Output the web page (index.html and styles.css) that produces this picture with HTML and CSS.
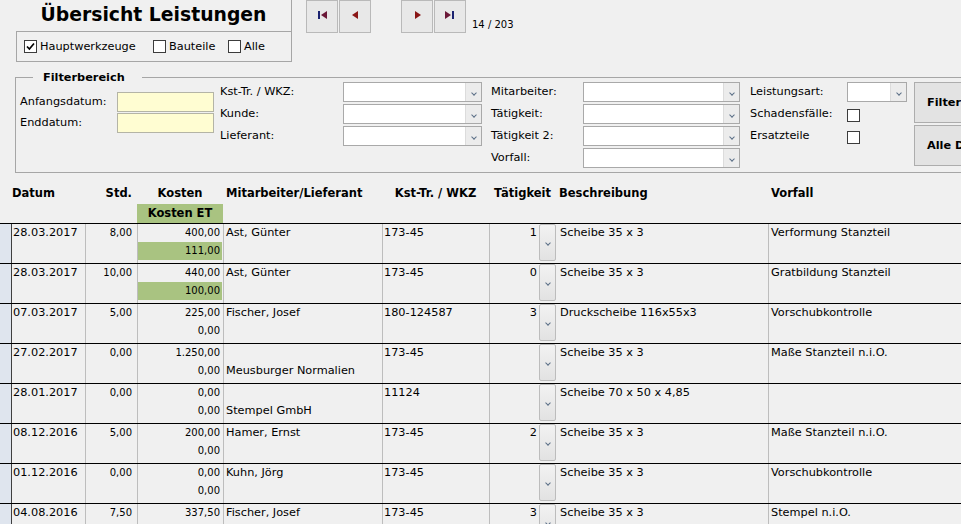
FILE: index.html
```html
<!DOCTYPE html>
<html lang="de">
<head>
    <meta charset="UTF-8">
    <title>Übersicht Leistungen</title>
    <link rel="stylesheet" href="styles.css">
</head>
<body>

    <!-- Kopfbereich: Titel, Auswahl, Navigation -->
    <div class="kopf">
        <div class="titel-box">
            <div class="titel">Übersicht Leistungen</div>
            <div class="optionen">
                <label class="option opt-1"><span class="check"><svg width="11" height="11" viewBox="0 0 11 11"><path d="M2 5.5 L4.4 8 L9 2.5" fill="none" stroke="#000" stroke-width="1.7"/></svg></span>Hauptwerkzeuge</label>
                <label class="option opt-2"><span class="check"></span>Bauteile</label>
                <label class="option"><span class="check"></span>Alle</label>
            </div>
        </div>

        <div class="navi">
            <button class="nav-btn"><svg width="9" height="8" viewBox="0 0 9 8"><rect x="0" y="0" width="2" height="8" fill="#1b2370"/><polygon points="9,0 3,4 9,8" fill="#6b1838"/></svg></button>
            <button class="nav-btn"><svg width="7" height="8" viewBox="0 0 7 8"><polygon points="6,0 0,4 6,8" fill="#8a1616"/></svg></button>
            <button class="nav-btn abstand"><svg width="7" height="8" viewBox="0 0 7 8"><polygon points="1,0 7,4 1,8" fill="#8a1616"/></svg></button>
            <button class="nav-btn"><svg width="10" height="8" viewBox="0 0 10 8"><polygon points="0,0 6,4 0,8" fill="#6b1838"/><rect x="7" y="0" width="2" height="8" fill="#1b2370"/></svg></button>
            <span class="datensatz">14 / 203</span>
        </div>
    </div>

    <!-- Filterbereich -->
    <div class="filter">
        <span class="filter-titel">Filterbereich</span>

        <div class="spalte spalte-a">
            <span>Anfangsdatum:</span><span class="feld-gelb"></span>
            <span>Enddatum:</span><span class="feld-gelb"></span>
        </div>

        <div class="spalte spalte-b">
            <span>Kst-Tr. / WKZ:</span><span class="combo"><span class="pfeil"></span></span>
            <span>Kunde:</span><span class="combo"><span class="pfeil"></span></span>
            <span>Lieferant:</span><span class="combo"><span class="pfeil"></span></span>
        </div>

        <div class="spalte spalte-c">
            <span>Mitarbeiter:</span><span class="combo"><span class="pfeil"></span></span>
            <span>Tätigkeit:</span><span class="combo"><span class="pfeil"></span></span>
            <span>Tätigkeit 2:</span><span class="combo"><span class="pfeil"></span></span>
            <span>Vorfall:</span><span class="combo"><span class="pfeil"></span></span>
        </div>

        <div class="spalte spalte-d">
            <span>Leistungsart:</span><span class="combo"><span class="pfeil"></span></span>
            <span>Schadensfälle:</span><span class="kasten"><span class="check"></span></span>
            <span>Ersatzteile</span><span class="kasten"><span class="check"></span></span>
        </div>

        <div class="knoepfe">
            <button class="filter-btn">Filter</button>
            <button class="filter-btn">Alle Daten</button>
        </div>
    </div>

    <!-- Liste -->
    <div class="liste-kopf">
        <div></div>
        <div class="k-datum">Datum</div>
        <div class="k-std">Std.</div>
        <div class="k-mitte">Kosten</div>
        <div>Mitarbeiter/Lieferant</div>
        <div class="k-mitte">Kst-Tr. / WKZ</div>
        <div class="k-mitte">Tätigkeit</div>
        <div>Beschreibung</div>
        <div>Vorfall</div>
        <div></div>
        <div></div>
        <div></div>
        <div class="kosten-et">Kosten ET</div>
    </div>

    <div class="zeile">
        <div class="z-sel"></div>
        <div class="z-datum">28.03.2017</div>
        <div class="z-std">8,00</div>
        <div class="z-kosten"><div>400,00</div><div class="gruen">111,00</div></div>
        <div class="z-ma"><div>Ast, Günter</div></div>
        <div class="z-kst">173-45</div>
        <div class="z-tk"><span class="tk-wert">1</span><span class="tk-btn"></span></div>
        <div class="z-text">Scheibe 35 x 3</div>
        <div class="z-vorfall">Verformung Stanzteil</div>
    </div>

    <div class="zeile">
        <div class="z-sel"></div>
        <div class="z-datum">28.03.2017</div>
        <div class="z-std">10,00</div>
        <div class="z-kosten"><div>440,00</div><div class="gruen">100,00</div></div>
        <div class="z-ma"><div>Ast, Günter</div></div>
        <div class="z-kst">173-45</div>
        <div class="z-tk"><span class="tk-wert">0</span><span class="tk-btn"></span></div>
        <div class="z-text">Scheibe 35 x 3</div>
        <div class="z-vorfall">Gratbildung Stanzteil</div>
    </div>

    <div class="zeile">
        <div class="z-sel"></div>
        <div class="z-datum">07.03.2017</div>
        <div class="z-std">5,00</div>
        <div class="z-kosten"><div>225,00</div><div>0,00</div></div>
        <div class="z-ma"><div>Fischer, Josef</div></div>
        <div class="z-kst">180-124587</div>
        <div class="z-tk"><span class="tk-wert">3</span><span class="tk-btn"></span></div>
        <div class="z-text">Druckscheibe 116x55x3</div>
        <div class="z-vorfall">Vorschubkontrolle</div>
    </div>

    <div class="zeile">
        <div class="z-sel"></div>
        <div class="z-datum">27.02.2017</div>
        <div class="z-std">0,00</div>
        <div class="z-kosten"><div>1.250,00</div><div>0,00</div></div>
        <div class="z-ma"><div></div><div>Meusburger Normalien</div></div>
        <div class="z-kst">173-45</div>
        <div class="z-tk"><span class="tk-wert"></span><span class="tk-btn"></span></div>
        <div class="z-text">Scheibe 35 x 3</div>
        <div class="z-vorfall">Maße Stanzteil n.i.O.</div>
    </div>

    <div class="zeile">
        <div class="z-sel"></div>
        <div class="z-datum">28.01.2017</div>
        <div class="z-std">0,00</div>
        <div class="z-kosten"><div>0,00</div><div>0,00</div></div>
        <div class="z-ma"><div></div><div>Stempel GmbH</div></div>
        <div class="z-kst">11124</div>
        <div class="z-tk"><span class="tk-wert"></span><span class="tk-btn"></span></div>
        <div class="z-text">Scheibe 70 x 50 x 4,85</div>
        <div class="z-vorfall"></div>
    </div>

    <div class="zeile">
        <div class="z-sel"></div>
        <div class="z-datum">08.12.2016</div>
        <div class="z-std">5,00</div>
        <div class="z-kosten"><div>200,00</div><div>0,00</div></div>
        <div class="z-ma"><div>Hamer, Ernst</div></div>
        <div class="z-kst">173-45</div>
        <div class="z-tk"><span class="tk-wert">2</span><span class="tk-btn"></span></div>
        <div class="z-text">Scheibe 35 x 3</div>
        <div class="z-vorfall">Maße Stanzteil n.i.O.</div>
    </div>

    <div class="zeile">
        <div class="z-sel"></div>
        <div class="z-datum">01.12.2016</div>
        <div class="z-std">0,00</div>
        <div class="z-kosten"><div>0,00</div><div>0,00</div></div>
        <div class="z-ma"><div>Kuhn, Jörg</div></div>
        <div class="z-kst">173-45</div>
        <div class="z-tk"><span class="tk-wert"></span><span class="tk-btn"></span></div>
        <div class="z-text">Scheibe 35 x 3</div>
        <div class="z-vorfall">Vorschubkontrolle</div>
    </div>

    <div class="zeile">
        <div class="z-sel"></div>
        <div class="z-datum">04.08.2016</div>
        <div class="z-std">7,50</div>
        <div class="z-kosten"><div>337,50</div><div>0,00</div></div>
        <div class="z-ma"><div>Fischer, Josef</div></div>
        <div class="z-kst">173-45</div>
        <div class="z-tk"><span class="tk-wert">3</span><span class="tk-btn"></span></div>
        <div class="z-text">Scheibe 35 x 3</div>
        <div class="z-vorfall">Stempel n.i.O.</div>
    </div>

</body>
</html>
```

FILE: styles.css
```css
/* Allgemein */
body {
    margin: 0;
    width: 961px;
    height: 524px;
    overflow: hidden;
    background: #f0f0f0;
    color: #000;
    font-family: "DejaVu Sans", sans-serif;
    font-size: 11.3px;
}

/* Kopfbereich */
.kopf {
    display: flex;
    height: 63px;
}

.titel-box {
    margin-left: 16px;
    width: 276px;
}

.titel {
    height: 32px;
    box-sizing: border-box;
    padding-bottom: 3px;
    border-right: 1px solid #a6a6a6;
    border-bottom: 1px solid #a6a6a6;
    display: flex;
    align-items: center;
    justify-content: center;
    font-weight: bold;
    font-size: 18.8px;
}

.optionen {
    height: 30px;
    box-sizing: border-box;
    border: 1px solid #a6a6a6;
    border-top: 0;
    display: flex;
    align-items: center;
    padding-left: 7px;
}

.option {
    display: flex;
    align-items: center;
    gap: 3px;
}

.opt-1 { width: 129px; }
.opt-2 { width: 75px; }

.check {
    width: 13px;
    height: 13px;
    box-sizing: border-box;
    border: 1px solid #3c3c3c;
    background: #fff;
    display: flex;
    align-items: center;
    justify-content: center;
}

/* Navigation */
.navi {
    display: flex;
    margin-left: 14px;
    height: 33px;
}

.nav-btn {
    width: 32px;
    height: 33px;
    margin: 0 1px 0 0;
    padding: 0 0 3px;
    border: 1px solid #b9b9b9;
    background: #e8e8e8;
    display: flex;
    align-items: center;
    justify-content: center;
}

.nav-btn.abstand {
    margin-left: 29px;
}

.datensatz {
    align-self: flex-end;
    margin-left: 5px;
    padding-bottom: 3px;
    font-size: 10px;
}

/* Filterbereich */
.filter {
    position: relative;
    margin: 14px 0 0 15px;
    width: 1000px;
    height: 96px;
    box-sizing: border-box;
    border: 1px solid #a6a6a6;
    padding: 4px 0 0 4px;
    display: flex;
    align-items: flex-start;
}

.filter-titel {
    position: absolute;
    top: -8px;
    left: 17px;
    padding: 0 17px 0 10px;
    background: #f0f0f0;
    font-weight: bold;
    line-height: 15px;
}

.spalte {
    display: grid;
    grid-auto-rows: 20px;
    row-gap: 2px;
    align-items: center;
}

.spalte > span:nth-child(odd) {
    margin-top: -2px;
}

.spalte-a {
    grid-template-columns: 97px 97px;
    row-gap: 1px;
    margin-top: 10px;
}

.spalte-b {
    grid-template-columns: 123px 139px;
    margin-left: 6px;
}

.spalte-c {
    grid-template-columns: 92px 157px;
    margin-left: 9px;
}

.spalte-d {
    grid-template-columns: 97px 60px;
    margin-left: 10px;
}

.feld-gelb {
    height: 20px;
    box-sizing: border-box;
    border: 1px solid #b4b4a6;
    background: #fffdd2;
}

.combo {
    height: 20px;
    box-sizing: border-box;
    border: 1px solid #a9a9a9;
    background: #fff;
    display: flex;
    justify-content: flex-end;
}

.pfeil {
    width: 15px;
    background: #ececec;
    border-left: 1px solid #dcdcdc;
    display: flex;
    align-items: center;
    justify-content: center;
}

.pfeil::after,
.tk-btn::after {
    content: "";
    width: 3px;
    height: 3px;
    margin-top: 1px;
    border-right: 1.5px solid #5b6f87;
    border-bottom: 1.5px solid #5b6f87;
    transform: rotate(45deg);
}

.kasten {
    display: flex;
    align-items: center;
    margin-top: 2px;
}

.knoepfe {
    margin-left: 7px;
    display: flex;
    flex-direction: column;
    gap: 2px;
}

.filter-btn {
    width: 80px;
    height: 41px;
    padding: 0 0 0 12px;
    border: 1px solid #adadad;
    background: #e3e3e3;
    text-align: left;
    font-family: inherit;
    font-size: 11.3px;
    font-weight: bold;
    white-space: nowrap;
}

/* Liste */
.liste-kopf,
.zeile {
    display: grid;
    grid-template-columns: 12px 73px 52px 86px 159px 107px 67px 212px 1fr;
}

.liste-kopf {
    grid-template-rows: 30px 19px;
    margin-top: 1px;
    font-weight: bold;
    font-size: 11.5px;
}

.liste-kopf > div {
    line-height: 18px;
    padding-top: 10px;
    white-space: nowrap;
}

.liste-kopf .k-std { text-align: right; padding-right: 5px; }
.liste-kopf .k-mitte { text-align: center; }
.liste-kopf > div:nth-child(5),
.liste-kopf > div:nth-child(8),
.liste-kopf > div:nth-child(9) { padding-left: 3px; }

.liste-kopf .kosten-et,
.liste-kopf > div:nth-child(n+10) {
    padding-top: 0;
    line-height: 19px;
}

.kosten-et {
    background: #a9c381;
    text-align: center;
}

.zeile {
    height: 40px;
    box-sizing: border-box;
    border-top: 1px solid #000;
    line-height: 17px;
}

.zeile > div {
    white-space: nowrap;
    overflow: hidden;
}

.z-sel {
    background: #dfe5ee;
    border-right: 1px solid #3f3f3f;
}

.z-datum { padding-left: 1px; }

.z-std,
.z-kosten,
.z-ma,
.z-kst,
.z-tk,
.z-vorfall {
    border-left: 1px solid #bdbdbd;
}

.z-std {
    text-align: right;
    padding-right: 5px;
    font-size: 10px;
}

.z-kosten {
    text-align: right;
    font-size: 10px;
}

.z-kosten > div {
    height: 18px;
    padding-right: 3px;
}

.z-kosten .gruen {
    background: #a9c381;
    margin-right: 1px;
    padding-right: 2px;
    line-height: 18px;
}

.z-ma { padding-left: 2px; }
.z-ma > div { height: 18px; }

.z-kst { padding-left: 1px; }

.z-tk {
    display: flex;
}

.tk-wert {
    flex: 1;
    text-align: right;
    padding-right: 2px;
}

.tk-btn {
    width: 17px;
    margin-bottom: 2px;
    box-sizing: border-box;
    border: 1px solid #bcbcbc;
    border-radius: 2px;
    background: linear-gradient(#f2f2f2, #e2e2e2);
    display: flex;
    align-items: center;
    justify-content: center;
}

.z-text { padding-left: 4px; }
.z-vorfall { padding-left: 2px; }
```
